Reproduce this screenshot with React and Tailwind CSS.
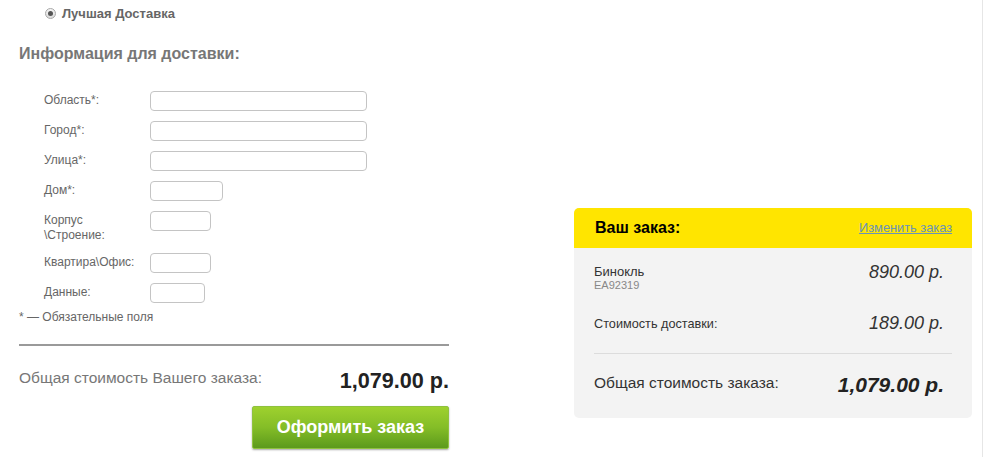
import React from 'react';

const fields = [
  { label: 'Область*:', w: 'w-[217px]' },
  { label: 'Город*:', w: 'w-[217px]' },
  { label: 'Улица*:', w: 'w-[217px]' },
  { label: 'Дом*:', w: 'w-[73px]' },
  { label: 'Корпус \\Строение:', w: 'w-[61px]' },
  { label: 'Квартира\\Офис:', w: 'w-[61px]' },
  { label: 'Данные:', w: 'w-[55px]' },
];

function Radio() {
  return (
    <span className="inline-flex items-center justify-center w-[11px] h-[11px] rounded-full border border-[#a8a8a8] bg-gradient-to-b from-[#f4f4f4] to-[#dcdcdc]">
      <span className="w-[5px] h-[5px] rounded-full bg-[#555]" />
    </span>
  );
}

export default function App() {
  return (
    <div className="w-[983px] h-[457px] bg-white border-r border-[#e6e6e6] overflow-hidden font-['Liberation_Sans',Arial,sans-serif]">
      <div className="flex pl-[19px]">
        {/* Left column: delivery form */}
        <div className="w-[430px] flex flex-col">
          <div className="flex items-center gap-[6px] pl-[26px] pt-[7px] h-[20px]">
            <Radio />
            <span className="text-[13px] font-bold text-[#666] leading-[14px]">Лучшая Доставка</span>
          </div>

          <h2 className="mt-[24px] text-[16px] font-bold text-[#777] leading-[20px]">
            Информация для доставки:
          </h2>

          <div className="mt-[27px] flex flex-col gap-[10px] pl-[25px]">
            {fields.map((f) => (
              <div key={f.label} className="flex">
                <label className="w-[106px] pt-[2px] text-[12px] leading-[15px] text-[#666] pr-2">{f.label}</label>
                <input
                  type="text"
                  className={`${f.w} h-[20px] rounded-[4px] border border-[#c4c4c4] bg-white outline-none`}
                />
              </div>
            ))}
          </div>

          <p className="mt-[7px] text-[12px] leading-[15px] text-[#666]">* — Обязательные поля</p>

          <div className="mt-[19px] h-[2px] bg-[#9a9a9a]" />

          <div className="mt-[22px] flex justify-between items-start">
            <span className="text-[15.5px] text-[#777] leading-[20px]">Общая стоимость Вашего заказа:</span>
            <span className="text-[21.6px] font-bold text-[#222] leading-[24px] mt-[1px]">1,079.00 р.</span>
          </div>

          <div className="mt-[13px] flex justify-end">
            <button className="w-[197px] h-[43px] rounded-[2px] border border-[#8fc23e] bg-gradient-to-b from-[#9ed12e] via-[#84bd27] to-[#5c9a1c] text-white text-[18px] font-bold shadow-[0_1px_2px_rgba(0,0,0,0.35)]">
              Оформить заказ
            </button>
          </div>
        </div>

        {/* Right column: order summary */}
        <div className="ml-[125px] mt-[208px] w-[398px] h-[210px] rounded-[5px] overflow-hidden bg-[#f3f3f3] flex flex-col">
          <div className="h-[40px] bg-[#ffe500] flex items-center justify-between pl-[21px] pr-[20px]">
            <span className="text-[16px] font-bold text-black">Ваш заказ:</span>
            <a href="#" className="text-[12.8px] text-[#6a93b8] underline">Изменить заказ</a>
          </div>

          <div className="px-[20px] pt-[14px]">
            <div className="flex justify-between items-start pr-[8px]">
              <div className="flex flex-col pt-[2px]">
                <span className="text-[13px] leading-[15px] text-[#333]">Бинокль</span>
                <span className="text-[11px] leading-[13px] text-[#888]">EA92319</span>
              </div>
              <span className="text-[18px] italic text-[#333] leading-[20px]">890.00 р.</span>
            </div>

            <div className="mt-[20px] flex justify-between items-center pr-[8px]">
              <span className="text-[12.7px] text-[#333] pt-[3px]">Стоимость доставки:</span>
              <span className="text-[18px] italic text-[#333] leading-[20px]">189.00 р.</span>
            </div>

            <div className="mt-[19px] h-px bg-[#dcdcdc]" />

            <div className="mt-[19px] flex justify-between items-start pr-[8px]">
              <span className="text-[15.5px] text-[#333] leading-[20px]">Общая стоимость заказа:</span>
              <span className="text-[21px] font-bold italic text-[#222] leading-[24px]">1,079.00 р.</span>
            </div>
          </div>
        </div>
      </div>
    </div>
  );
}
